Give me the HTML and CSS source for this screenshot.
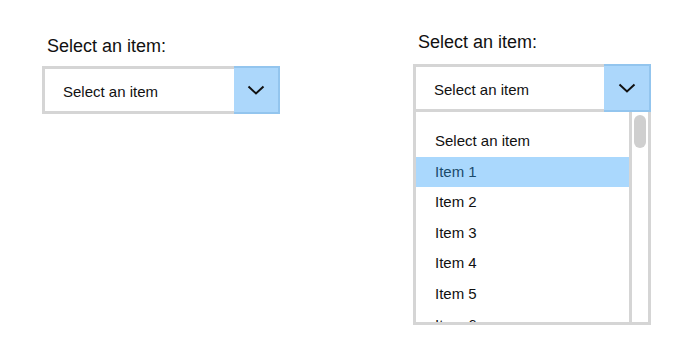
FILE: index.html
```html
<!DOCTYPE html>
<html lang="en">
<head>
    <meta charset="UTF-8">
    <meta name="viewport" content="width=device-width, initial-scale=1.0">
    <title>Select an item</title>
    <link rel="stylesheet" href="styles.css">
</head>
<body>

    <div class="page">
        <!-- Закрытый список -->
        <div class="dropdown closed">
            <div class="dropdown-label">Select an item:</div>
            <div class="select">
                <div class="select-value">Select an item</div>
                <div class="select-btn">
                    <svg width="18" height="10" viewBox="0 0 18 10"><path d="M1.5 1.5 L9 8.5 L16.5 1.5" fill="none" stroke="#111" stroke-width="2"/></svg>
                </div>
            </div>
        </div>

        <!-- Открытый список -->
        <div class="dropdown open">
            <div class="dropdown-label">Select an item:</div>
            <div class="select">
                <div class="select-value">Select an item</div>
                <div class="select-btn">
                    <svg width="18" height="10" viewBox="0 0 18 10"><path d="M1.5 1.5 L9 8.5 L16.5 1.5" fill="none" stroke="#111" stroke-width="2"/></svg>
                </div>
            </div>
            <div class="list">
                <ul class="options">
                    <li>Select an item</li>
                    <li class="active">Item 1</li>
                    <li>Item 2</li>
                    <li>Item 3</li>
                    <li>Item 4</li>
                    <li>Item 5</li>
                    <li>Item 6</li>
                    <li>Item 7</li>
                </ul>
                <div class="scrollbar">
                    <div class="thumb"></div>
                </div>
            </div>
        </div>
    </div>

</body>
</html>
```

FILE: styles.css
```css
body {
    font-family: "Liberation Sans", Arial, sans-serif;
    margin: 0;
    padding: 0;
    background-color: #fff;
    color: #111;
}
.page {
    display: flex;
    align-items: flex-start;
    gap: 133px;
    padding-left: 42px;
}
.dropdown {
    width: 238px;
}
.dropdown.closed {
    padding-top: 35px;
}
.dropdown.open {
    padding-top: 31px;
}
.dropdown-label {
    font-size: 18px;
    line-height: 22px;
    padding-left: 5px;
    margin-bottom: 9px;
}
.open .dropdown-label {
    margin-bottom: 11px;
}
.select {
    display: flex;
    height: 48px;
}
.select-value {
    flex: 1;
    display: flex;
    align-items: center;
    padding-left: 18px;
    padding-top: 2px;
    font-size: 15px;
    border: 3px solid #d5d5d5;
    border-right: none;
}
.select-btn {
    width: 44px;
    display: flex;
    align-items: center;
    justify-content: center;
    background-color: #acd7fb;
    border: 2px solid #93c5ee;
    border-left: none;
}
.open .select-btn {
    width: 45px;
}
.list {
    display: flex;
    height: 210px;
    border: 3px solid #d5d5d5;
    border-top: none;
    overflow: hidden;
}
.options {
    flex: 1;
    list-style: none;
    margin: 0;
    padding: 14px 0 0 0;
    border-right: 3px solid #d5d5d5;
}
.options li {
    height: 30.6px;
    line-height: 30.6px;
    padding-left: 19px;
    font-size: 15px;
}
.options li.active {
    background-color: #aad8fd;
    color: #1b4a6b;
}
.scrollbar {
    width: 16px;
    padding: 3px 2px 0 2px;
    box-sizing: border-box;
}
.thumb {
    height: 33px;
    border-radius: 6px;
    background-color: #cfcfcf;
}
```
